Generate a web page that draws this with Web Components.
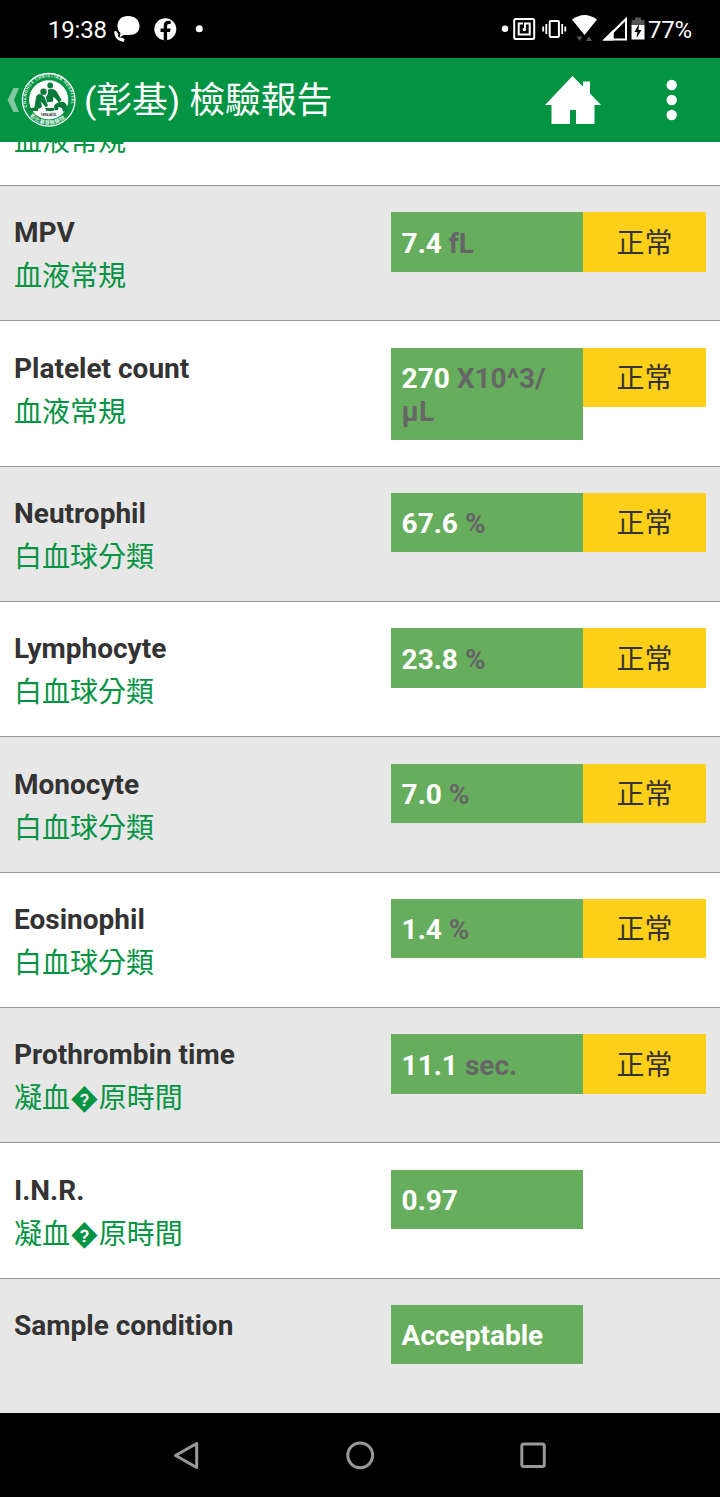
<!DOCTYPE html>
<html lang="zh-Hant">
<head>
<meta charset="utf-8">
<title>檢驗報告</title>
<style>
  body {
    margin: 0;
    width: 720px;
    height: 1497px;
    overflow: hidden;
    display: flex;
    flex-direction: column;
    background: #fff;
    font-family: Roboto, "Noto Sans CJK TC", sans-serif;
  }
</style>
</head>
<body>
<status-bar></status-bar>
<app-header>(彰基) 檢驗報告</app-header>
<report-list></report-list>
<nav-bar></nav-bar>

<script>
const statusBarTemplate = document.createElement( "template" );
statusBarTemplate.innerHTML = `
  <style>
    :host {
      display: flex;
      flex: none;
      justify-content: space-between;
      height: 58px;
      background: #000;
      color: #fff;
      font-size: 24px;
      line-height: 61px;
    }
    .side { display: flex; }
    .left { padding-left: 48px; }
    .right { padding-right: 28px; }
    svg { display: block; flex: none; }
    .time { width: 59px; letter-spacing: -0.2px; }
    .level { width: 44px; letter-spacing: -0.2px; white-space: nowrap; }
  </style>
  <div class="side left">
    <span class="time">19:38</span>
    <svg width="100" height="58" viewBox="107 0 100 58" fill="#fff">
      <path d="M128 16c7 0 11.500 4 11.500 10s-4 9-11 9h-5l-4 2.500 1-4.500c-2-1.500-3-4-3-7 0-6 4-10 10.500-10z"/>
      <path d="M115.500 32.500q.5 6.500 7.500 8" fill="none" stroke="#fff" stroke-width="2.600" stroke-linecap="round"/>
      <path d="M115.500 32l2 2.500M120.500 38.500l3 1" fill="none" stroke="#fff" stroke-width="2" stroke-linecap="round"/>
      <circle cx="165.300" cy="29.200" r="11"/>
      <path d="M163.700 40.500V32h-3.200v-3.600h3.200v-2.600c0-3.300 1.900-5 4.700-5 1 0 1.900.1 2.300.2v3h-1.700c-1.500 0-1.900.8-1.900 1.900v2.500h3.500l-.6 3.600h-2.900v8.500z" fill="#000"/>
      <circle cx="199.300" cy="28.800" r="3.500"/>
    </svg>
  </div>
  <div class="side right">
    <svg width="148" height="58" viewBox="500 0 148 58" fill="#fff">
      <circle cx="505" cy="28.800" r="3.200"/>
      <g fill="none" stroke="#fff" stroke-width="2">
        <rect x="514.200" y="19" width="20" height="20" rx="1.500"/>
        <path d="M523 23.500h-4.300v11h11v-11H525v5"/>
        <rect x="549.700" y="21" width="9.200" height="16" rx="1"/>
        <path d="M546.300 24v10M543.200 26.500v5M562.200 24v10M565.300 26.500v5" stroke-width="1.800"/>
      </g>
      <circle cx="524.300" cy="29.500" r="1.700"/>
      <path d="M572 19.500q12.500-9 25 0L584.500 35z"/>
      <path d="M576.500 36.500h6l-3 4.500zM586 41h6l-3-4.500z" fill="#555"/>
      <path d="M627 16.500v24H602.500zm-2 5L613.500 33v5.500H625z" fill-rule="evenodd"/>
      <path d="M602.500 40.500l11-11v11z"/>
      <path d="M635 17.500h6v2.500h3.500v6h-13v-6h3.500z" fill="#555"/>
      <path d="M631.500 25h13v14.500h-13z"/>
      <path d="M639 24l-4.500 8h3l-1 6 5-8h-3z" fill="#000"/>
    </svg>
    <span class="level">77%</span>
  </div>
`;

const appHeaderTemplate = document.createElement( "template" );
appHeaderTemplate.innerHTML = `
  <style>
    :host {
      display: flex;
      flex: none;
      align-items: center;
      box-sizing: border-box;
      height: 84px;
      padding-left: 4px;
      background: #029343;
      color: #fff;
    }
    svg { display: block; flex: none; }
    h1 {
      flex: 1;
      margin: 0 0 0 6px;
      padding-top: 2px;
      font-size: 35.800px;
      font-weight: 400;
      line-height: 50px;
      white-space: nowrap;
    }
    .home { margin-right: 65px; }
    .more { margin-right: 36.500px; }
  </style>
  <svg width="74" height="60" viewBox="4 70 74 60">
    <path d="M13.500 88h5.500l-5 12 5 12h-5.500L7.500 100z" fill="#80c99f"/>
    <circle cx="48.700" cy="99.800" r="26.300" fill="#029343" stroke="#fff" stroke-width="1.300"/>
    <circle cx="48.700" cy="99.800" r="19.600" fill="#fff"/>
    <path id="top" d="M27.400 107A22.500 22.500 0 1 1 70 107" fill="none"/>
    <path id="bottom" d="M30 116A24.700 24.700 0 0 0 67.500 116" fill="none"/>
    <g fill="#e4f5ea" font-weight="700">
      <text font-size="4.200" textLength="82"><textPath href="#top">CHANGHUA CHRISTIAN HOSPITAL</textPath></text>
      <text font-size="5.300" textLength="39"><textPath href="#bottom">彰化基督教醫院</textPath></text>
    </g>
    <g fill="#087a3b">
      <circle cx="50.200" cy="85.500" r="2.900"/>
      <circle cx="43.500" cy="91.700" r="3.200"/>
      <path d="M48 89.500q6-2 9 2.500l4.500 8-2.500 2.500-5.500-6-.5 5-6 1-1-5.500 2-3.500z"/>
      <path d="M36 97q2-4 5.500-2.500l3 2.500 3.500 9-2.500 1-4.500-5.500 1 5.500-4 2v2H28.500l1-2.500 5-1z"/>
      <path d="M54 106.500q3-5.500 9-4.500 3.500.5 4 5l1.500 4.500h-5.500l-1-3.500-3.500-1-.5 3-3 .5z"/>
      <path d="M45 108h10l-1.500 3h-7z"/>
    </g>
    <text x="40.500" y="116" font-size="3.800" font-weight="700" fill="#333" textLength="16">1896 創立</text>
  </svg>
  <h1><slot></slot></h1>
  <svg class="home" width="56" height="48" viewBox="0 0 56 48" fill="#fff">
    <path d="M0 29L27.500 0 38 10.500V5.500h7v12L56 29h-6.500v19H31V34h-6v14H6.500V29z"/>
  </svg>
  <svg class="more" width="18" height="44" viewBox="0 0 18 44" fill="#fff">
    <circle cx="5.700" cy="7" r="5.200"/>
    <circle cx="5.700" cy="22" r="5.200"/>
    <circle cx="5.700" cy="37" r="5.200"/>
  </svg>
`;

const reportRowTemplate = document.createElement( "template" );
reportRowTemplate.innerHTML = `
  <style>
    :host {
      display: flex;
      flex: none;
      align-items: flex-start;
      box-sizing: border-box;
      min-height: 135.350px;
      padding: 26.300px 14px 25.600px;
      border-bottom: 1px solid #999;
      background: #fff;
      font-size: 28px;
      line-height: 33.200px;
    }
    :host([shade]) { background: #e7e7e7; }
    :host(:last-child) { min-height: 134.350px; border-bottom: none; }
    .label { width: 376.600px; padding-top: 4px; }
    .name { color: #333; font-weight: 700; }
    .group { margin-top: 11px; color: #029343; }
    .value {
      box-sizing: border-box;
      width: 192.700px;
      min-height: 59.300px;
      padding: 14.500px 11px 11.500px;
      background: #66ad5d;
      color: #fff;
      font-weight: 700;
    }
    .unit { color: #666; overflow-wrap: anywhere; }
    .state {
      box-sizing: border-box;
      width: 122.700px;
      height: 59.300px;
      padding-top: 14.500px;
      background: #ffd019;
      color: #333;
      text-align: center;
    }
    .state:empty { display: none; }
  </style>
  <div class="label">
    <div class="name"></div>
    <div class="group"></div>
  </div>
  <div class="value"><span class="number"></span> <span class="unit"></span></div>
  <div class="state"></div>
`;

const reportListTemplate = document.createElement( "template" );
reportListTemplate.innerHTML = `
  <style>
    :host {
      display: flex;
      flex: 1;
      flex-direction: column;
      justify-content: flex-end;
      min-height: 0;
      overflow: hidden;
    }
  </style>
`;

const navBarTemplate = document.createElement( "template" );
navBarTemplate.innerHTML = `
  <style>
    :host {
      display: flex;
      flex: none;
      align-items: center;
      justify-content: center;
      gap: 143px;
      height: 84px;
      background: #000;
    }
    svg { display: block; fill: none; stroke: #999; stroke-width: 3; stroke-linejoin: round; }
  </style>
  <svg width="30" height="30"><path d="M24.700 3.500v24L3.500 15.500z"/></svg>
  <svg width="30" height="30"><circle cx="15.200" cy="15.300" r="12.400"/></svg>
  <svg width="30" height="30"><rect x="3.800" y="4" width="22.500" height="22.500" rx="2"/></svg>
`;

const results = [
  [ "", "血液常規", "", "", "" ],
  [ "MPV", "血液常規", "7.4", "fL", "正常" ],
  [ "Platelet count", "血液常規", "270", "X10^3/μL", "正常" ],
  [ "Neutrophil", "白血球分類", "67.6", "%", "正常" ],
  [ "Lymphocyte", "白血球分類", "23.8", "%", "正常" ],
  [ "Monocyte", "白血球分類", "7.0", "%", "正常" ],
  [ "Eosinophil", "白血球分類", "1.4", "%", "正常" ],
  [ "Prothrombin time", "凝血\uFFFD原時間", "11.1", "sec.", "正常" ],
  [ "I.N.R.", "凝血\uFFFD原時間", "0.97", "", "" ],
  [ "Sample condition", "", "Acceptable", "", "" ]
];

class StatusBar extends HTMLElement {
  constructor() {
    super();
    this.attachShadow( {mode:"open"} );
    this.shadowRoot.appendChild( statusBarTemplate.content.cloneNode(true) );
  }
}

class AppHeader extends HTMLElement {
  constructor() {
    super();
    this.attachShadow( {mode:"open"} );
    this.shadowRoot.appendChild( appHeaderTemplate.content.cloneNode(true) );
  }
}

class ReportRow extends HTMLElement {
  constructor() {
    super();
    this.attachShadow( {mode:"open"} );
    this.shadowRoot.appendChild( reportRowTemplate.content.cloneNode(true) );
  }

  set result( fields ) {
    [ "name", "group", "number", "unit", "state" ].forEach( (part, i) => {
      this.shadowRoot.querySelector( "." + part ).textContent = fields[i];
    });
    // the name line keeps its height when there is no name
    if ( !fields[0] ) {
      this.shadowRoot.querySelector( ".name" ).textContent = "\u00a0";
    }
    if ( !fields[2] ) {
      this.shadowRoot.querySelector( ".value" ).remove();
    }
  }
}

class ReportList extends HTMLElement {
  constructor() {
    super();
    this.attachShadow( {mode:"open"} );
    this.shadowRoot.appendChild( reportListTemplate.content.cloneNode(true) );
  }

  connectedCallback() {
    results.forEach( (fields, i) => {
      const row = document.createElement( "report-row" );
      row.result = fields;
      row.toggleAttribute( "shade", i % 2 === 1 );
      this.shadowRoot.appendChild( row );
    });
  }
}

class NavBar extends HTMLElement {
  constructor() {
    super();
    this.attachShadow( {mode:"open"} );
    this.shadowRoot.appendChild( navBarTemplate.content.cloneNode(true) );
  }
}

window.customElements.define( "status-bar", StatusBar );
window.customElements.define( "app-header", AppHeader );
window.customElements.define( "report-row", ReportRow );
window.customElements.define( "report-list", ReportList );
window.customElements.define( "nav-bar", NavBar );
</script>
</body>
</html>
